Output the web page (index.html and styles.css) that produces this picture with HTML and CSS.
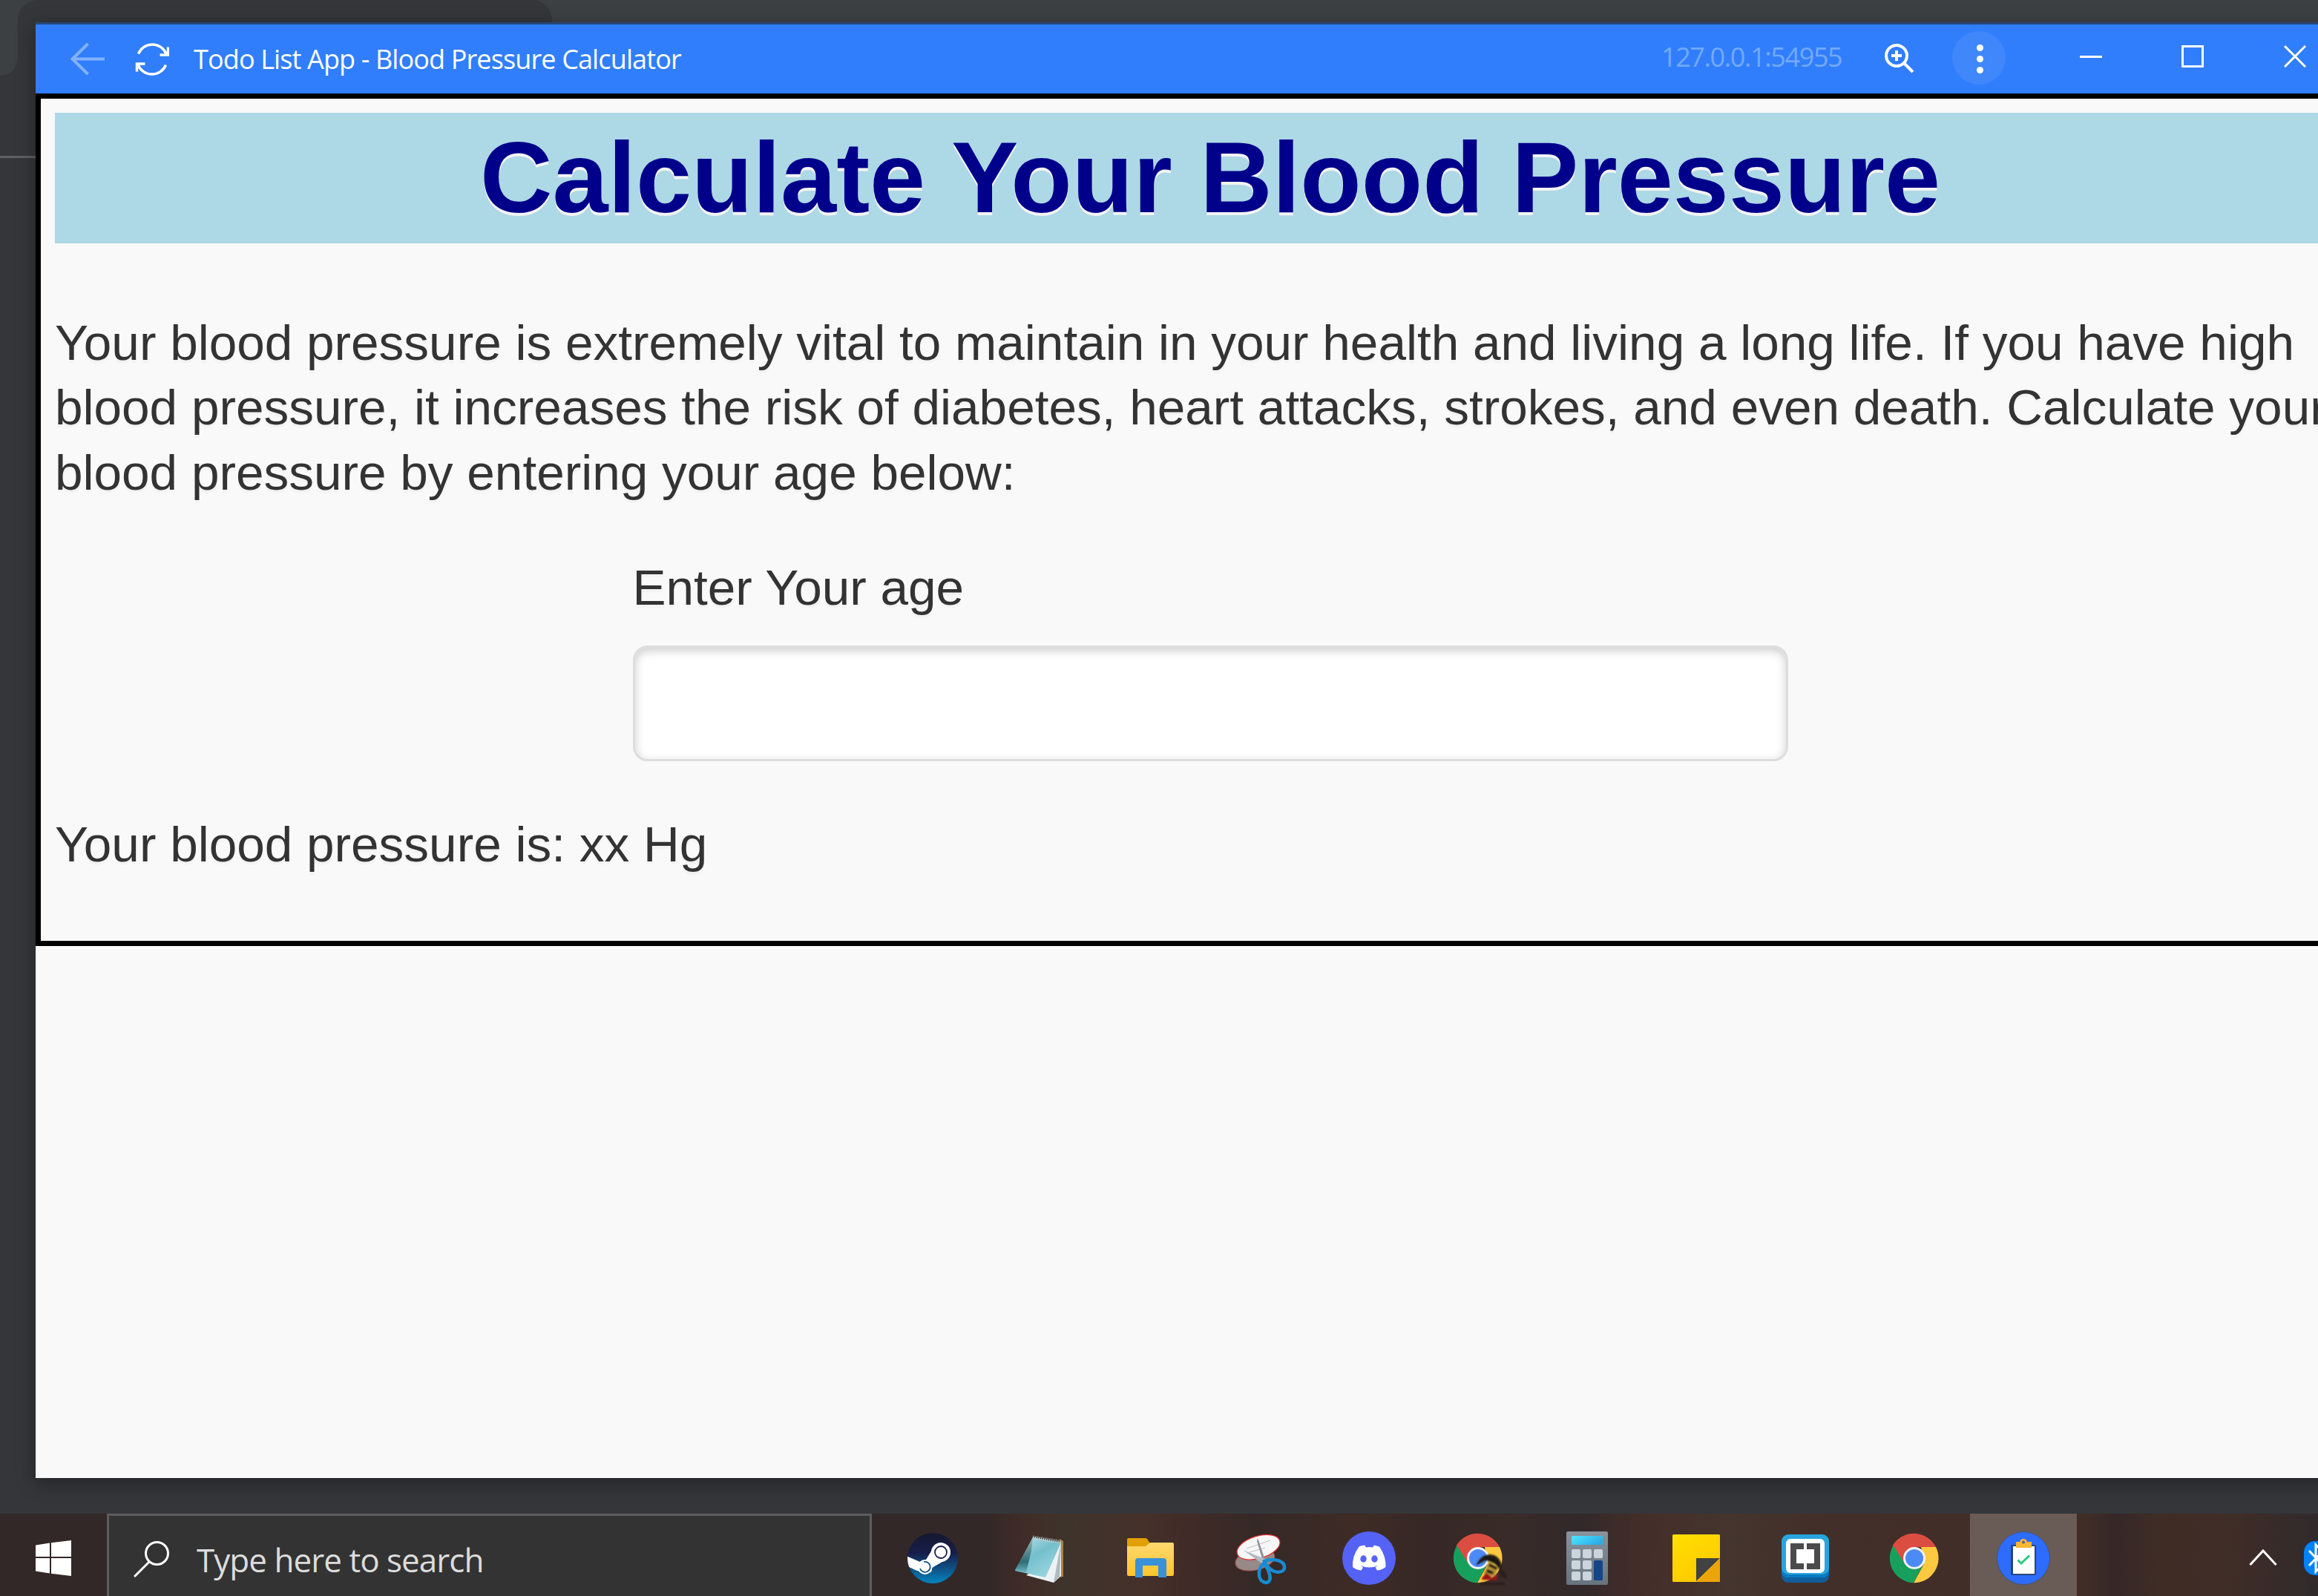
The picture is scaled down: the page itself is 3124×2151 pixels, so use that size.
FILE: index.html
```html
<!DOCTYPE html>
<html lang="en">
<head>
<meta charset="utf-8">
<title>Blood Pressure Calculator</title>
<link rel="stylesheet" href="styles.css">
</head>
<body>
<div class="desktop">
  <svg class="browser-behind" viewBox="0 0 3124 240" aria-hidden="true">
    <path fill="#3c4043" d="M0 0H3124V33H744V25Q740 4 722 0H48Q26 4 24 25V78Q22 100 0 102Z"/>
    <path fill="#606064" d="M0 210H48V213H0Z"/>
  </svg>

  <section class="window">
    <header class="titlebar">
      <svg class="ico back" viewBox="0 0 46 46"><path d="M23.500 2L2.500 22.500L23.500 43M3 22.500H46"/></svg>
      <svg class="ico refresh" viewBox="0 0 46 46"><path d="M4.500 15.500A20.300 20.300 0 0 1 42 15.500M44.500 6.500V17H33.500M41.500 30.500A20.300 20.300 0 0 1 4 30.500M2.500 39.500V29H13.500"/></svg>
      <h2 class="window-title"><span>Todo List App - Blood Pressure Calculator</span></h2>
      <span class="origin">127.0.0.1:54955</span>
      <svg class="ico zoom" viewBox="0 0 42 42"><circle cx="17" cy="17" r="14"/><path d="M17 10V24M10 17H24M27 27L39 39"/></svg>
      <span class="menu"><i></i><i></i><i></i></span>
      <svg class="ico minimise" viewBox="0 0 30 30"><path d="M0 15.500H30"/></svg>
      <svg class="ico maximise" viewBox="0 0 30 30"><path d="M1.500 1.500H28.500V28.500H1.500Z"/></svg>
      <svg class="ico close" viewBox="0 0 30 30"><path d="M1 1L29 29M29 1L1 29"/></svg>
    </header>

    <main class="page">
      <h1>Calculate Your Blood Pressure</h1>
      <p>Your blood pressure is extremely vital to maintain in your health and living a long life. If you have high blood pressure, it increases the risk of diabetes, heart attacks, strokes, and even death. Calculate your blood pressure by entering your age below:</p>
      <div class="field">
        <label for="age">Enter Your age</label>
        <input id="age" type="text">
      </div>
      <p>Your blood pressure is: xx Hg</p>
    </main>
  </section>

  <footer class="taskbar">
    <div class="start">
      <svg viewBox="0 0 48 48"><path fill="#fff" d="M0 6.500L19 3.500V22H0ZM21 3.200L48 0V22H21ZM0 24H19V44.500L0 41.500ZM21 24H48V48L21 44.800Z"/></svg>
    </div>
    <div class="search">
      <svg viewBox="0 0 50 50"><circle cx="31.500" cy="16.500" r="15" fill="none" stroke="#fff" stroke-width="3"/><path d="M21 28L2 47" stroke="#fff" stroke-width="3" stroke-linecap="round"/></svg>
      <span>Type here to search</span>
    </div>
    <nav class="apps">
      <svg class="app" viewBox="0 0 144 111">
        <defs><linearGradient id="steam" x2="0" y2="1"><stop stop-color="#14192f"/><stop offset=".4" stop-color="#171d4b"/><stop offset="1" stop-color="#0584bf"/></linearGradient>
        <clipPath id="steamClip"><circle cx="72" cy="60" r="34"/></clipPath></defs>
        <circle cx="72" cy="60" r="34" fill="url(#steam)"/>
        <g clip-path="url(#steamClip)">
          <path d="M36 57L55 65Q59 63 63 62L71 49L90 62L71 73L70 79L51 77L36 70Z" fill="#fff"/>
        </g>
        <circle cx="83" cy="52" r="13" fill="#fff"/><circle cx="83" cy="52" r="8" fill="#fff" stroke="#171d4b" stroke-width="1.800"/>
        <circle cx="61.500" cy="72" r="10" fill="#fff"/><path d="M55 74A7 7 0 1 0 60 65" fill="none" stroke="#0d4c83" stroke-width="1.800"/>
      </svg>
      <svg class="app" viewBox="0 0 144 111">
        <defs><linearGradient id="pad" x2=".7" y2="1"><stop stop-color="#bfe5ec"/><stop offset=".5" stop-color="#74bfcc"/><stop offset="1" stop-color="#9ad7df"/></linearGradient>
        <linearGradient id="padFold" x2="0" y2="1"><stop stop-color="#9db5b8"/><stop offset=".7" stop-color="#2f6d76"/><stop offset="1" stop-color="#6bb2bd"/></linearGradient></defs>
        <path d="M96 34L101 37V85L90 86Z" fill="#a98343"/>
        <path d="M98 38V84L88 93L51 83L58 78Z" fill="#edf2f5"/>
        <path d="M98 38L96 85L88 93Z" fill="#aebbc1"/>
        <path d="M60 32L98 39L77 86L36 77Z" fill="url(#pad)"/>
        <path d="M60 32L58 50L51 79L36 76Z" fill="url(#padFold)"/>
        <path d="M60 32L97 38" stroke="#c3c8c8" stroke-width="5" stroke-dasharray="1.500 1.300"/>
        <path d="M60 30L97 36" stroke="#555" stroke-width="1"/>
      </svg>
      <svg class="app" viewBox="0 0 144 111">
        <defs><linearGradient id="folder" x2="0" y2="1"><stop stop-color="#ffd86f"/><stop offset="1" stop-color="#fdc52c"/></linearGradient></defs>
        <path d="M42 33H64Q66 33 67 34L71 40L66 47H40V35Q40 33 42 33Z" fill="#e0a000"/>
        <path d="M40 44H65L71 39H101Q103 39 103 41V81Q103 84 101 84H42Q40 84 40 82Z" fill="url(#folder)"/>
        <path d="M51 86V64Q51 60 55 60H88Q93 60 93 64V86H82V70H61V86Z" fill="#3991da"/>
      </svg>
      <svg class="app" viewBox="0 0 144 111">
        <g transform="rotate(-13 70 60)"><ellipse cx="65" cy="61" rx="27" ry="14" fill="#978987" stroke="#a84e4a"/></g>
        <g transform="rotate(-17 71 45)"><ellipse cx="70" cy="45" rx="30" ry="15" fill="#f7f7f8" stroke="#df2c2c" stroke-width="1.200"/></g>
        <path d="M54 47L86 36M58 52L79 46" stroke="#c0c0c0"/>
        <path d="M69 33L79 62L75 61L68 37Z" fill="#8f9298"/>
        <path d="M49 49L79 61L76 68Z" fill="#b4bac2"/>
        <path d="M77 67C67 77 70 92 80 93C91 92 84 75 77 67ZM78 64C87 83 104 81 105 73C106 62 87 60 78 64Z" fill="none" stroke="#188bd1" stroke-width="4.500"/>
      </svg>
      <svg class="app" viewBox="0 0 144 111">
        <circle cx="72" cy="60" r="36" fill="#5562f6"/>
        <path d="M59 44L66 42.500L68 45.500Q72 44.700 77 45.500L79 42.500L86 44.500Q95 57 94.500 72Q89 76 83 76.500L80.500 72.500L84 70Q72 75 61 70L64 72.500L61.500 76.500Q55 76 50 72Q49 57 59 44Z" fill="#fff"/>
        <ellipse cx="64.500" cy="61" rx="4.200" ry="4.700" fill="#5562f6"/><ellipse cx="79.500" cy="61" rx="4.200" ry="4.700" fill="#5562f6"/>
      </svg>
      <svg class="app" viewBox="0 0 144 111">
        <g id="chrome">
          <path d="M42.500 43.500A33.300 33.300 0 0 1 101 45H72L58 67.500Z" fill="#dc4d41"/>
          <path d="M101 45A33.300 33.300 0 0 1 71 93.300L85 67.500L81 45Z" fill="#fdc940"/>
          <path d="M43.500 43A33.300 33.300 0 0 0 71 93.300L84 68L60 69Z" fill="#17a05c"/>
          <circle cx="72" cy="60" r="15" fill="#f4f4f6"/><circle cx="72" cy="60" r="12" fill="#4c8bf5"/>
        </g>
        <g class="soft">
          <path d="M69 70Q76 55 88 55Q101 56 104 70L102 76L94 66L82 63Z" fill="#1d1916"/>
          <path d="M87 64L99 73L95 84L82 88L80 80Z" fill="#b58f38"/>
          <path d="M88 62L100 69M87 69L97 74M84 77L92 80" stroke="#16120f" stroke-width="3"/>
          <path d="M77 87L83 80L91 87L99 81L97 90L77 89Z" fill="#981316"/>
          <path d="M100 72L109 80L111 87L102 84ZM74 93H108V96H76Z" fill="#2b1d1d"/>
        </g>
      </svg>
      <svg class="app" viewBox="0 0 144 111">
        <defs><linearGradient id="calc" x2="0" y2="1"><stop stop-color="#8a929c"/><stop offset="1" stop-color="#67747f"/></linearGradient><linearGradient id="lcd" x2="1" y2=".5"><stop stop-color="#51e6ff"/><stop offset="1" stop-color="#2caee9"/></linearGradient></defs>
        <rect x="44" y="24" width="56" height="72" rx="2" fill="url(#calc)"/>
        <rect x="51" y="30" width="42" height="12" rx="1.500" fill="url(#lcd)"/>
        <g fill="#ccd4dc"><rect x="51" y="48" width="12" height="12" rx="2"/><rect x="66" y="48" width="12" height="12" rx="2"/><rect x="81" y="48" width="12" height="12" rx="2"/><rect x="51" y="63" width="12" height="12" rx="2"/><rect x="66" y="63" width="12" height="12" rx="2"/><rect x="51" y="78" width="12" height="12" rx="2"/><rect x="66" y="78" width="12" height="12" rx="2"/></g>
        <rect x="81" y="63" width="12" height="27" rx="2" fill="#14458b"/>
      </svg>
      <svg class="app" viewBox="0 0 144 111">
        <defs><linearGradient id="note" x2=".6" y2="1"><stop stop-color="#ffe000"/><stop offset="1" stop-color="#ffc900"/></linearGradient></defs>
        <rect x="40" y="28" width="64" height="64" rx="1.500" fill="url(#note)"/>
        <path d="M72 61Q72 60 73 60H104L72 91Z" fill="#424242"/><path d="M104 60V92H72Z" fill="#eba507"/>
      </svg>
      <svg class="app" viewBox="0 0 144 111">
        <rect x="40" y="35" width="64" height="58" rx="9" fill="#115e9c"/>
        <rect x="40" y="28" width="64" height="58" rx="9" fill="#28a4df"/><path d="M40 73V77Q40 86 49 86H95Q104 86 104 77V73Q103 81 95 82H49Q41 81 40 73Z" fill="#087bc3"/>
        <rect x="46" y="34" width="52" height="46" rx="6" fill="#fff"/>
        <path d="M52 40H70V48H60V67H70V75H52ZM74 40H92V75H74V67H84V48H74Z" fill="#4b4b4b"/>
      </svg>
      <svg class="app" viewBox="0 0 144 111"><use href="#chrome"/></svg>
      <svg class="app active" viewBox="0 0 144 111">
        <circle cx="72" cy="60" r="35.500" fill="#2d6cff" stroke="#42547d" stroke-width="1"/>
        <rect x="55" y="42" width="34" height="41" rx="2" fill="#294575"/>
        <rect x="58" y="44" width="29" height="37" fill="#fff"/>
        <path d="M62 38H67Q68 34 72 34Q76 34 77 38H83V46H62Z" fill="#fbb52f"/><circle cx="72" cy="38.500" r="2" fill="#4967a0"/>
        <path d="M64.500 62.500L69 67L80 56.500" fill="none" stroke="#27ca7c" stroke-width="3"/>
      </svg>
    </nav>
    <div class="tray">
      <svg class="chevron" viewBox="0 0 38 24"><path d="M1.500 22L19 3L36.500 22" fill="none" stroke="#fff" stroke-width="3"/></svg>
      <svg class="bluetooth" viewBox="0 0 32 46"><rect width="32" height="46" rx="15" fill="#0082fc"/><path d="M7 13L25 32L16 41V5L25 14L7 33" fill="none" stroke="#fff" stroke-width="3"/></svg>
    </div>
  </footer>
</div>
</body>
</html>
```
FILE: styles.css
```css
* { box-sizing: border-box; }

body {
  margin: 0;
  overflow: hidden;
  font-family: "Liberation Sans", Arial, sans-serif;
}

.desktop {
  width: 3124px;
  height: 2151px;
  padding-top: 30px;
  overflow: hidden;
  position: relative;
  display: flex;
  flex-direction: column;
  background: #35363a;
}

.browser-behind {
  position: absolute;
  inset: 0 0 auto 0;
  width: 3124px;
  height: 240px;
}

.window {
  position: relative;
  flex: none;
  width: 3166px;
  height: 1962px;
  margin: 0 0 48px 48px;
  border-top: 3px solid #284777;
  background: #f9f9f9;
  box-shadow: 0 6px 24px rgba(0, 0, 0, .35);
}

.titlebar {
  height: 93px;
  padding-left: 47px;
  display: flex;
  align-items: center;
  background: #307efb;
  color: #fff;
}

.ico {
  flex: none;
  fill: none;
  stroke: #fff;
  stroke-width: 3;
}

.back { width: 46px; height: 46px; opacity: .4; stroke-width: 4; }
.refresh { width: 46px; height: 46px; margin-left: 41px; stroke-width: 3.5; }

.window-title {
  flex: none;
  width: 1978px;
  margin: 0 0 0 33px;
  font: 400 36px/50px "Open Sans", "Noto Sans", sans-serif;
  letter-spacing: -.87px;
  white-space: nowrap;
}

.origin {
  flex: none;
  width: 245px;
  margin-top: -5px;
  font: 500 36px/50px "Open Sans", "Noto Sans", sans-serif;
  letter-spacing: -1.4px;
  color: #73a9fd;
  white-space: nowrap;
}

.zoom { width: 42px; height: 42px; margin: -2px 0 0 55px; stroke-width: 4; }

.menu {
  flex: none;
  width: 72px;
  height: 72px;
  margin: -3px 0 0 50px;
  padding: 3px 0 0 2px;
  display: flex;
  flex-direction: column;
  align-items: center;
  justify-content: center;
  gap: 6px;
  border-radius: 50%;
  background: #4087fc;
}

.menu i {
  width: 9px;
  height: 9px;
  border-radius: 50%;
  background: #fff;
}

.minimise, .maximise, .close { width: 30px; height: 30px; margin-top: -7px; }
.minimise { margin-left: 100px; }
.maximise { margin-left: 107px; }
.close { margin-left: 108px; }

.page {
  height: 1149px;
  padding: 19px;
  border: 7px solid #000;
  font-size: 67.5px;
  line-height: 87.75px;
  color: #333;
  text-shadow: 0 4px 0 #f3f3f3;
}

.page h1 {
  margin: 0 0 90px;
  font-size: 135px;
  line-height: 175.5px;
  text-align: center;
  color: #00008b;
  background: #add8e6;
}

.page p { margin: 0; }

.field {
  width: 1557px;
  margin: 67.5px auto;
}

.field label {
  display: block;
  margin-bottom: 34px;
}

.field input {
  display: block;
  width: 100%;
  height: 156px;
  border: 3px solid #ddd;
  border-radius: 20px;
  background: #fff;
  box-shadow: inset 0 4px 13px rgba(0, 0, 0, .2);
}

.taskbar {
  position: relative;
  flex: none;
  height: 111px;
  display: flex;
  background:
    linear-gradient(90deg, #322827 0, #322827 1330px, #402c28 1380px, #3f342b 1440px, #45302a 1540px, #402b27 1600px, #352927 1690px, #3e2b26 1830px, #362826 1930px, #392b28 2030px, #32292a 2130px, #452e29 2220px, #44352e 2330px, #432f29 2440px, #422e28 2650px, #402d26 2810px, #352828 2850px, #3f2c25 2910px, #402d27 3000px, #302a2c 3124px);
}

.start {
  flex: none;
  width: 144px;
  padding: 36px 48px;
}

.start svg { display: block; width: 48px; height: 48px; }

.search {
  flex: none;
  width: 1031px;
  padding-left: 33px;
  display: flex;
  align-items: center;
  border: solid #5d5d5d;
  border-width: 3px 3px 0;
  background: #333;
  color: #dcdcdc;
}

.search svg { width: 50px; height: 50px; margin-top: 10px; }

.search span {
  margin: 10px 0 0 35px;
  font: 400 44px/60px "Open Sans", "Noto Sans", sans-serif;
  letter-spacing: -.97px;
  white-space: nowrap;
}

.apps {
  flex: none;
  margin-left: 10px;
  display: flex;
  gap: 3px;
}

.app { flex: none; width: 144px; height: 111px; }
.active { background: #695b56; }
.soft { filter: blur(1.3px); }

.tray {
  flex: none;
  width: 325px;
  padding-left: 232px;
  display: flex;
  align-items: center;
  overflow: hidden;
}

.chevron { flex: none; width: 38px; height: 24px; margin-top: 7px; }
.bluetooth { flex: none; width: 32px; height: 46px; margin: 8px 0 0 36px; }
```
